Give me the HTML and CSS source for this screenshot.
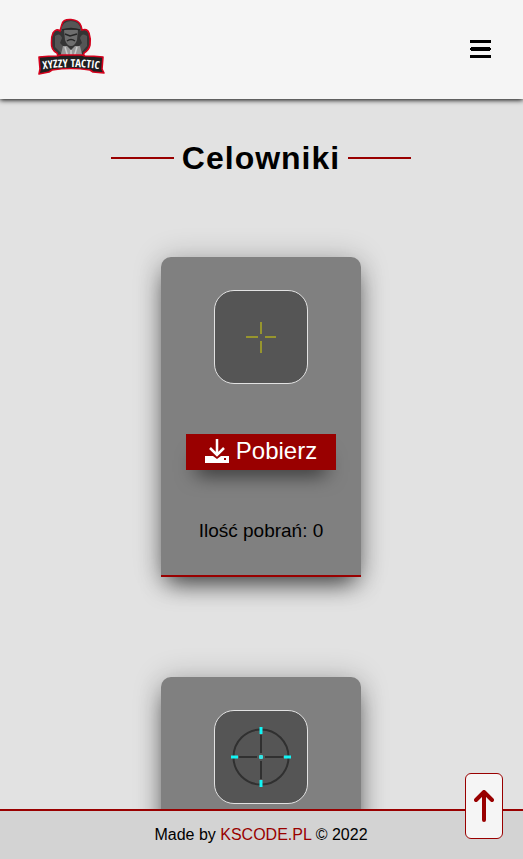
FILE: index.html
```html
<!DOCTYPE html>
<html lang="pl">
<head>
<meta charset="utf-8">
<meta name="viewport" content="width=device-width, initial-scale=1">
<title>Xyzzy Tactic</title>
<link rel="stylesheet" href="styles.css">
</head>
<body>
<header class="header">
  <a class="logo" href="#" aria-label="Xyzzy Tactic">
    <svg width="68" height="58" viewBox="0 0 68 58">
      <path d="M25 6Q26 1 34 1.500Q42 2 44 8L45 12Q50 10 52 15Q54 21 53 27Q52 32 47 35L46 41H22L20 35Q14 32 14.500 25Q14 19 16 15Q19 10 23 13Z" fill="#343434" stroke="#d5001c" stroke-width="1.600"/>
      <path d="M24 13Q25 3 34 3Q43 3 44 13L39 11H29Z" fill="#565656"/>
      <path d="M27 12H41L40 22Q38 28 34 28Q30 28 28 22Z" fill="#6e6e6e"/>
      <path d="M25 12Q34 9 43 12M28 16L33 18L40 16M30 23Q34 20 38 23" fill="none" stroke="#262626" stroke-width="1.500"/>
      <path d="M18 18Q23 14 25 20L23 25L28 30L25 36L18 29ZM50 18Q45 14 43 20L45 25L40 30L43 36L50 28Z" fill="#555"/>
      <path d="M26 28L30 28L34 32L38 28H43L46 40H23Z" fill="#999"/>
      <path d="M28 29L31 39M40 29L37 39M34 32V39" stroke="#ccc" stroke-width="1.500"/>
      <path d="M2 39Q12 38 20 38L24 37H45L48 38Q57 38 66 39L65 51L67 55L56 54L53 52Q34 49 15 52L12 54L2 56L3 51Z" fill="#202020" stroke="#d5001c" stroke-width="1.600" stroke-linejoin="round"/>
      <path id="band" d="M1 52Q34 46 67 52" fill="none"/>
      <text class="logo-text"><textPath href="#band" startOffset="50%" text-anchor="middle">XYZZY TACTIC</textPath></text>
    </svg>
  </a>
  <button class="menu" type="button" aria-label="Menu">
    <svg width="22" height="20" viewBox="0 0 22 20"><path d="M0 0H21V3H0ZM1 7H20V8H21V10H20V11H1V10H0V8H1ZM0 15H21V18H0Z"/></svg>
  </button>
</header>
<main class="main">
  <h1 class="title">Celowniki</h1>
  <article class="card">
    <div class="preview">
      <svg width="92" height="92" viewBox="0 0 92 92"><path d="M46 31V43M46 50V62M31 46H43M50 46H61" stroke="#97952e" stroke-width="2"/></svg>
    </div>
    <button class="download" type="button">
      <svg width="24" height="24" viewBox="0 0 24 24"><path d="M12 0V16M5 9L12 16L19 9" fill="none" stroke="#fff" stroke-width="2.500"/><path d="M0 17H8L12 20L16 17H24V24H0ZM19 19V21H21V19Z" fill="#fff" fill-rule="evenodd"/></svg>
      <span>Pobierz</span>
    </button>
    <p class="count">Ilość pobrań: 0</p>
  </article>
  <article class="card">
    <div class="preview">
      <svg width="92" height="92" viewBox="0 0 92 92"><g fill="none" stroke="#303030" stroke-width="2"><circle cx="46" cy="46" r="27.500"/><path d="M46 24V42M46 50V68M24 46H42M50 46H68"/></g><path d="M44.500 16h3v7h-3zM44.500 69h3v7h-3zM16 44.500h7v3h-7zM69 44.500h7v3h-7z" fill="#12f5f5"/><rect x="44" y="44" width="4" height="4" rx="1" fill="#35e4e4"/></svg>
    </div>
    <button class="download" type="button">
      <svg width="24" height="24" viewBox="0 0 24 24"><path d="M12 0V16M5 9L12 16L19 9" fill="none" stroke="#fff" stroke-width="2.500"/><path d="M0 17H8L12 20L16 17H24V24H0ZM19 19V21H21V19Z" fill="#fff" fill-rule="evenodd"/></svg>
      <span>Pobierz</span>
    </button>
    <p class="count">Ilość pobrań: 0</p>
  </article>
</main>
<footer class="footer"><p>Made by <a href="#">KSCODE.PL</a> © 2022</p></footer>
<a class="to-top" href="#" aria-label="Do góry">
  <svg width="20" height="32" viewBox="0 0 20 32"><path d="M10 2V30M2 10L10 2L18 10" fill="none" stroke="#900" stroke-width="4" stroke-linecap="round" stroke-linejoin="round"/></svg>
</a>
</body>
</html>
```
FILE: styles.css
```css
* {
  box-sizing: border-box;
  margin: 0;
  padding: 0;
}

body {
  display: flex;
  flex-direction: column;
  height: 100vh;
  overflow: hidden;
  background: #e2e2e2;
  color: #000;
  font: 16px/20px "Liberation Sans", Arial, sans-serif;
}

button {
  border: 0;
  font: inherit;
  cursor: pointer;
}

svg {
  display: block;
}

.header {
  z-index: 1;
  display: flex;
  flex: none;
  align-items: flex-start;
  justify-content: space-between;
  padding: 18px 31px 23px 37px;
  background: #f5f5f5;
  box-shadow: 0 1px 5px #000;
}

.logo-text {
  fill: #fff;
  font: bold 11px "Open Sans Condensed", "Noto Sans", sans-serif;
}

.menu {
  padding-top: 22px;
  background: none;
}

.main {
  display: flex;
  flex: 1;
  flex-direction: column;
  align-items: center;
  gap: 100px;
  min-height: 0;
  padding: 40px 21px 100px 20px;
  overflow: hidden auto;
  scrollbar-width: none;
}

.title {
  display: flex;
  align-items: center;
  gap: 8px;
  width: 300px;
  margin-bottom: -20px;
  font-size: 32px;
  line-height: 38px;
  letter-spacing: 1px;
}

.title::before,
.title::after {
  content: "";
  flex: 1;
  height: 2px;
  background: #900;
}

.card {
  display: flex;
  flex: none;
  flex-direction: column;
  align-items: center;
  width: 200px;
  padding: 33px 0;
  border-bottom: 2px solid #900;
  border-radius: 10px 10px 0 0;
  background: #808080;
  box-shadow: 0 12px 24px -6px rgba(0, 0, 0, 0.7), 0 0 30px rgba(0, 0, 0, 0.2);
}

.preview {
  overflow: hidden;
  border: 1px solid #e2e2e2;
  border-radius: 20px;
  background: #555;
}

.download {
  display: flex;
  align-items: center;
  justify-content: center;
  gap: 7px;
  width: 150px;
  height: 36px;
  margin: 50px 0;
  padding-bottom: 3px;
  background: #900;
  box-shadow: 0 14px 20px -10px rgba(0, 0, 0, 0.7);
  color: #fff;
  font-size: 24px;
}

.count {
  font-size: 19px;
  line-height: 22px;
}

.footer {
  z-index: 1;
  flex: none;
  padding: 14px 21px 14px 20px;
  border-top: 2px solid #900;
  background: #d3d3d3;
  text-align: center;
}

.footer a {
  color: #900;
  text-decoration: none;
}

.to-top {
  position: fixed;
  right: 20px;
  bottom: 20px;
  z-index: 2;
  padding: 16px 8px;
  border: 1px solid #900;
  border-radius: 6px;
  background: #f5f5f5;
}
```
